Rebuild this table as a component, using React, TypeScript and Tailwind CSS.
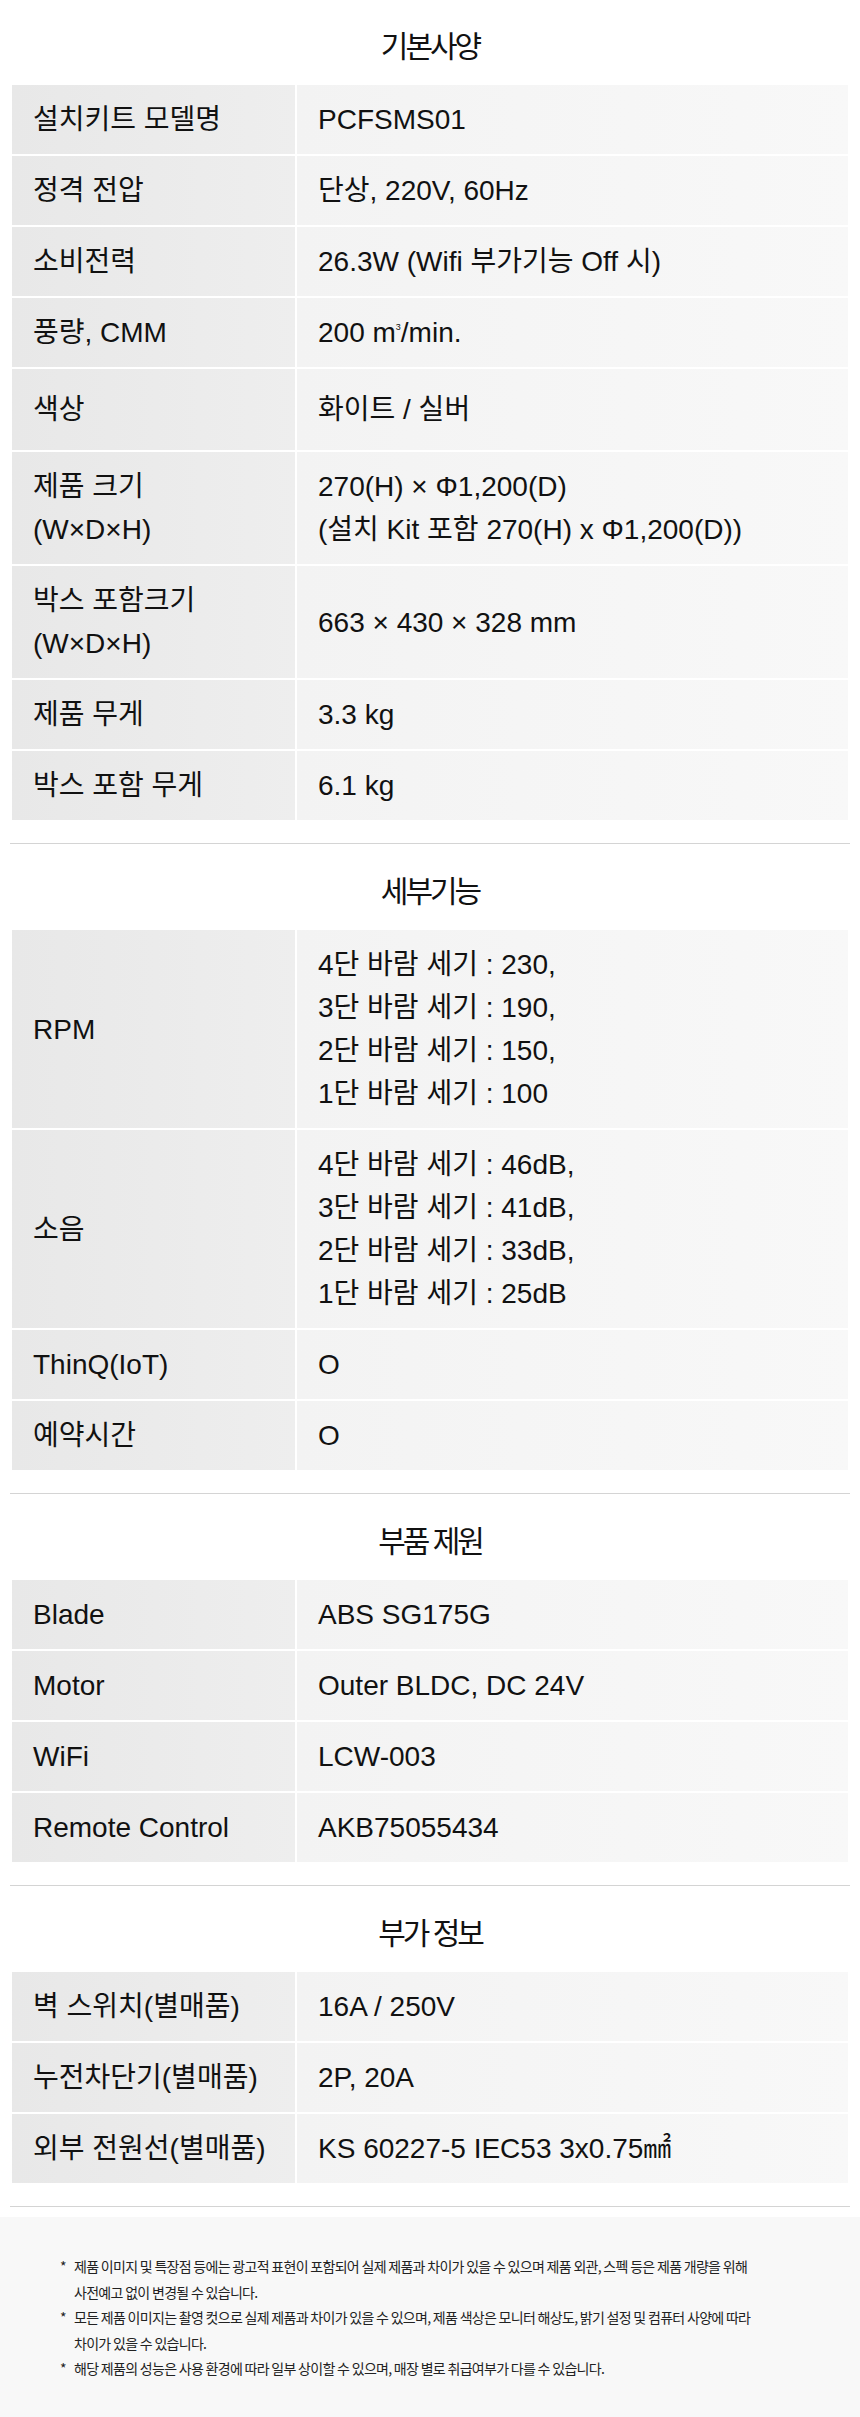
import React from "react";

type Row = { label: React.ReactNode; value: React.ReactNode; py?: string };

const FONT = "font-['Liberation_Sans','Noto_Sans_CJK_KR',sans-serif]";

function Lines({ items }: { items: string[] }) {
  return (
    <>
      {items.map((t, i) => (
        <div key={i}>{t}</div>
      ))}
    </>
  );
}

function Section({ title, rows }: { title: string; rows: Row[] }) {
  return (
    <section className="pt-[28px] pb-[23px] first:pt-[27px]">
      <h2 className="h-[40px] leading-[40px] text-center text-[30px] tracking-[-3px] font-normal text-[#111]">
        {title}
      </h2>
      <div className="mt-[18px] mx-[2px] flex flex-col gap-[2px]">
        {rows.map((r, i) => (
          <div key={i} className="flex gap-[2px]">
            <div
              className={`w-[283px] shrink-0 flex items-center pl-[21px] pr-2 bg-gradient-to-r from-[#e8e8e8] to-[#eeeeee] ${
                r.py ?? "py-[13px]"
              }`}
            >
              <div className="text-[28px] leading-[43px] text-[#111]">{r.label}</div>
            </div>
            <div
              className={`flex-1 flex items-center pl-[21px] pr-2 bg-gradient-to-r from-[#f3f3f3] to-[#f8f8f8] ${
                r.py ?? "py-[13px]"
              }`}
            >
              <div className="text-[28px] leading-[43px] text-[#111]">{r.value}</div>
            </div>
          </div>
        ))}
      </div>
    </section>
  );
}

function Divider() {
  return <div className="h-px bg-[#d4d4d4]" />;
}

export default function App() {
  const basic: Row[] = [
    { label: "설치키트 모델명", value: "PCFSMS01" },
    { label: "정격 전압", value: "단상, 220V, 60Hz" },
    { label: "소비전력", value: "26.3W (Wifi 부가기능 Off 시)" },
    {
      label: "풍량, CMM",
      value: (
        <span>
          200 m<span className="text-[9px] relative -top-[12px] leading-none">3</span>/min.
        </span>
      ),
    },
    { label: "색상", value: "화이트 / 실버", py: "py-[19px]" },
    {
      label: <Lines items={["제품 크기", "(W×D×H)"]} />,
      value: <Lines items={["270(H) × Φ1,200(D)", "(설치 Kit 포함 270(H) x Φ1,200(D))"]} />,
    },
    {
      label: <Lines items={["박스 포함크기", "(W×D×H)"]} />,
      value: "663 × 430 × 328 mm",
    },
    { label: "제품 무게", value: "3.3 kg" },
    { label: "박스 포함 무게", value: "6.1 kg" },
  ];

  const detail: Row[] = [
    {
      label: "RPM",
      value: (
        <Lines
          items={[
            "4단 바람 세기 : 230,",
            "3단 바람 세기 : 190,",
            "2단 바람 세기 : 150,",
            "1단 바람 세기 : 100",
          ]}
        />
      ),
    },
    {
      label: "소음",
      value: (
        <Lines
          items={[
            "4단 바람 세기 : 46dB,",
            "3단 바람 세기 : 41dB,",
            "2단 바람 세기 : 33dB,",
            "1단 바람 세기 : 25dB",
          ]}
        />
      ),
    },
    { label: "ThinQ(IoT)", value: "O" },
    { label: "예약시간", value: "O" },
  ];

  const parts: Row[] = [
    { label: "Blade", value: "ABS SG175G" },
    { label: "Motor", value: "Outer BLDC, DC 24V" },
    { label: "WiFi", value: "LCW-003" },
    { label: "Remote Control", value: "AKB75055434" },
  ];

  const extra: Row[] = [
    { label: "벽 스위치(별매품)", value: "16A / 250V" },
    { label: "누전차단기(별매품)", value: "2P, 20A" },
    { label: "외부 전원선(별매품)", value: "KS 60227-5 IEC53 3x0.75㎟" },
  ];

  const notes: string[][] = [
    [
      "제품 이미지 및 특장점 등에는 광고적 표현이 포함되어 실제 제품과 차이가 있을 수 있으며 제품 외관, 스펙 등은 제품 개량을 위해",
      "사전예고 없이 변경될 수 있습니다.",
    ],
    [
      "모든 제품 이미지는 촬영 컷으로 실제 제품과 차이가 있을 수 있으며, 제품 색상은 모니터 해상도, 밝기 설정 및 컴퓨터 사양에 따라",
      "차이가 있을 수 있습니다.",
    ],
    ["해당 제품의 성능은 사용 환경에 따라 일부 상이할 수 있으며, 매장 별로 취급여부가 다를 수 있습니다."],
  ];

  return (
    <div className={`w-[860px] bg-white ${FONT}`}>
      <div className="px-[10px]">
        <Section title="기본사양" rows={basic} />
        <Divider />
        <Section title="세부기능" rows={detail} />
        <Divider />
        <Section title="부품 제원" rows={parts} />
        <Divider />
        <Section title="부가 정보" rows={extra} />
        <Divider />
      </div>
      <div className="mt-[10px] bg-[#f8f8f8] pt-[37px] pb-[36px] pl-[60px] font-['Noto_Sans_CJK_KR',sans-serif] text-[14px] leading-[25.5px] tracking-[-0.7px] text-[#222]">
        {notes.map((n, i) => (
          <div key={i} className="flex">
            <span className="w-[14px] shrink-0">*</span>
            <div className="whitespace-nowrap">
              {n.map((l, j) => (
                <div key={j}>{l}</div>
              ))}
            </div>
          </div>
        ))}
      </div>
    </div>
  );
}
